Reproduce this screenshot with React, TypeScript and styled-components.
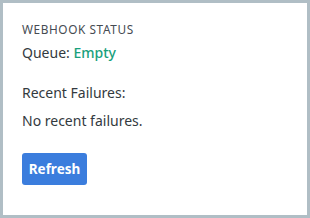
import React from "react";
import styled, { createGlobalStyle } from "styled-components";

const GlobalStyle = createGlobalStyle`
  html, body {
    margin: 0;
    padding: 0;
    background: #b0bec5;
  }
  body {
    padding: 3px;
    font-family: "Noto Sans", "Open Sans", sans-serif;
  }
`;

const Card = styled.div`
  width: 304px;
  height: 212px;
  box-sizing: border-box;
  background: #ffffff;
  padding: 19px 19px;
  display: flex;
  flex-direction: column;
  align-items: flex-start;
  color: #333a40;
`;

const Title = styled.h3`
  margin: 0;
  font-size: 11.8px;
  line-height: 15px;
  font-weight: 400;
  letter-spacing: 0.6px;
  text-transform: uppercase;
  color: #454b52;
`;

const Line = styled.p<{ $gap?: number }>`
  margin: ${(p) => p.$gap ?? 0}px 0 0;
  font-size: 14px;
  line-height: 18px;
`;

const Status = styled.span`
  color: #18a07c;
  font-weight: 500;
`;

const Button = styled.button`
  margin-top: 23px;
  width: 65px;
  height: 32px;
  border: none;
  border-radius: 3px;
  background: #3b7ddd;
  color: #ffffff;
  font-family: inherit;
  font-size: 13.5px;
  font-weight: 700;
  cursor: pointer;
`;

export default function App() {
  return (
    <>
      <GlobalStyle />
      <Card>
        <Title>Webhook Status</Title>
        <Line $gap={7}>
          Queue: <Status>Empty</Status>
        </Line>
        <Line $gap={22}>Recent Failures:</Line>
        <Line $gap={10}>No recent failures.</Line>
        <Button>Refresh</Button>
      </Card>
    </>
  );
}
